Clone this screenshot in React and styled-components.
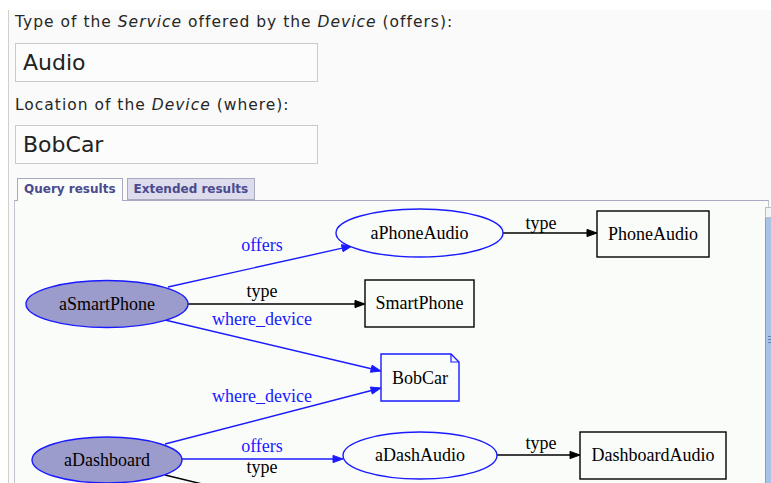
import React from 'react';
import styled, { createGlobalStyle } from 'styled-components';

const Global = createGlobalStyle`
  html, body { margin: 0; padding: 0; background: #ffffff; overflow: hidden; }
  body { font-family: "DejaVu Sans", "Liberation Sans", sans-serif; }
`;

const Page = styled.div`
  margin: 10px 0 0 8px;
  border-left: 1px solid #cfd1cf;
  background: #f9faf9;
  padding: 2px 0 0 5px;
  height: 480px;
`;

const FieldLabel = styled.div`
  margin: ${p => p.$top}px 0 0 1px;
  font-size: 15.5px;
  letter-spacing: 1px;
  line-height: 20px;
  color: #262626;
  em { font-style: italic; }
`;

const TextBox = styled.div`
  margin: ${p => p.$top}px 0 0 1px;
  box-sizing: border-box;
  width: 303px;
  height: 39px;
  border: 1px solid #c9cbc9;
  background: #fbfcfb;
  padding: 0 0 0 7px;
  font-size: 22px;
  line-height: 37px;
  color: #222222;
`;

const TabRow = styled.div`
  display: flex;
  gap: 4px;
  margin-top: 14px;
  padding-left: 3px;
  position: relative;
  z-index: 1;
`;

const Tab = styled.div`
  box-sizing: border-box;
  height: ${p => (p.$active ? 23 : 22)}px;
  margin-bottom: ${p => (p.$active ? -1 : 0)}px;
  border: 1px solid #a9a9c2;
  border-bottom: ${p => (p.$active ? 'none' : '1px solid #a9a9c2')};
  background: ${p => (p.$active ? '#fafcfa' : '#dcdced')};
  padding: 0 6px;
  font-size: 12px;
  font-weight: bold;
  line-height: 21px;
  color: #4a4a8c;
`;

const Panel = styled.div`
  box-sizing: border-box;
  width: 755px;
  height: 300px;
  border: 1px solid #c2c3cc;
  border-top-color: #a9a9c2;
  background: #fafcfa;
  display: flex;
`;

const Graph = styled.svg`
  flex: none;
  display: block;
  font-family: "Liberation Serif", "DejaVu Serif", serif;
`;

const ScrollBar = styled.div`
  flex: none;
  width: 10px;
  margin-top: 6px;
  display: flex;
  flex-direction: column;
`;

const ScrollButton = styled.div`
  height: 11px;
  box-sizing: border-box;
  border: 1px solid #b8bcc4;
  background: #f3f4f6;
`;

const ScrollThumb = styled.div`
  flex: 1;
  background: #a9c3e7;
  border-left: 1px solid #7f9fcc;
  display: flex;
  flex-direction: column;
  align-items: flex-start;
  padding: 118px 0 0 2px;
  gap: 2px;
`;

const Grip = styled.div`
  width: 4px;
  height: 1px;
  background: #5f7fb0;
`;

const BLUE = '#1a1aff';

function arrow(x1, y1, x2, y2) {
  const dx = x2 - x1, dy = y2 - y1, L = Math.hypot(dx, dy);
  const ux = dx / L, uy = dy / L;
  const bx = x2 - ux * 10, by = y2 - uy * 10;
  const nx = -uy * 3.6, ny = ux * 3.6;
  return {
    line: [x1, y1, bx, by],
    poly: `${x2},${y2} ${bx + nx},${by + ny} ${bx - nx},${by - ny}`,
  };
}

const edges = [
  { from: [168, 287], to: [352, 246], color: BLUE, label: 'offers', lx: 262, ly: 251 },
  { from: [188, 304], to: [365, 304], color: '#000', label: 'type', lx: 262, ly: 297 },
  { from: [165, 320], to: [381, 371], color: BLUE, label: 'where_device', lx: 262, ly: 325 },
  { from: [165, 444], to: [381, 388], color: BLUE, label: 'where_device', lx: 262, ly: 402 },
  { from: [182, 459], to: [343, 459], color: BLUE, label: 'offers', lx: 262, ly: 452 },
  { from: [165, 475], to: [260, 498], color: '#000', label: 'type', lx: 262, ly: 473, noHead: true },
  { from: [503, 233], to: [597, 233], color: '#000', label: 'type', lx: 541, ly: 229 },
  { from: [497, 455], to: [580, 455], color: '#000', label: 'type', lx: 541, ly: 449 },
];

const ellipses = [
  { cx: 107, cy: 304, rx: 81, ry: 23.5, fill: '#9c9ccc', label: 'aSmartPhone' },
  { cx: 107, cy: 460, rx: 75, ry: 23, fill: '#9c9ccc', label: 'aDashboard' },
  { cx: 419.5, cy: 233, rx: 83.5, ry: 24, fill: '#fafcfa', label: 'aPhoneAudio' },
  { cx: 420, cy: 455.5, rx: 77, ry: 23.5, fill: '#fafcfa', label: 'aDashAudio' },
];

const boxes = [
  { x: 597, y: 211, w: 112, h: 46, label: 'PhoneAudio' },
  { x: 365, y: 280, w: 109, h: 47, label: 'SmartPhone' },
  { x: 580, y: 432, w: 146, h: 47, label: 'DashboardAudio' },
];

export default function App() {
  return (
    <>
      <Global />
      <Page>
        <FieldLabel $top={0}>
          Type of the <em>Service</em> offered by the <em>Device</em> (offers):
        </FieldLabel>
        <TextBox $top={11}>Audio</TextBox>
        <FieldLabel $top={13}>
          Location of the <em>Device</em> (where):
        </FieldLabel>
        <TextBox $top={10}>BobCar</TextBox>
        <TabRow>
          <Tab $active>Query results</Tab>
          <Tab>Extended results</Tab>
        </TabRow>
        <Panel>
          <Graph width="750" height="298" viewBox="15 201 750 298">
            {edges.map((e, i) => {
              const a = arrow(e.from[0], e.from[1], e.to[0], e.to[1]);
              return (
                <g key={i}>
                  <line
                    x1={a.line[0]}
                    y1={a.line[1]}
                    x2={e.noHead ? e.to[0] : a.line[2]}
                    y2={e.noHead ? e.to[1] : a.line[3]}
                    stroke={e.color}
                    strokeWidth="1.4"
                  />
                  {!e.noHead && <polygon points={a.poly} fill={e.color} stroke={e.color} strokeWidth="1" />}
                  <text x={e.lx} y={e.ly} fontSize="18" textAnchor="middle" fill={e.color}>
                    {e.label}
                  </text>
                </g>
              );
            })}
            {ellipses.map((n, i) => (
              <g key={i}>
                <ellipse cx={n.cx} cy={n.cy} rx={n.rx} ry={n.ry} fill={n.fill} stroke={BLUE} strokeWidth="1.4" />
                <text x={n.cx} y={n.cy + 5.5} fontSize="18" textAnchor="middle" fill="#000">
                  {n.label}
                </text>
              </g>
            ))}
            {boxes.map((b, i) => (
              <g key={i}>
                <rect x={b.x} y={b.y} width={b.w} height={b.h} fill="#fafcfa" stroke="#000" strokeWidth="1.4" />
                <text x={b.x + b.w / 2} y={b.y + b.h / 2 + 5.5} fontSize="18" textAnchor="middle" fill="#000">
                  {b.label}
                </text>
              </g>
            ))}
            <path d="M381,354 H451 L459,362 V401 H381 Z" fill="#fafcfa" stroke={BLUE} strokeWidth="1.4" />
            <path d="M451,354 V362 H459" fill="none" stroke={BLUE} strokeWidth="1.2" />
            <text x="420" y="384" fontSize="18" textAnchor="middle" fill="#000">BobCar</text>
          </Graph>
          <ScrollBar>
            <ScrollButton />
            <ScrollThumb>
              <Grip />
              <Grip />
              <Grip />
            </ScrollThumb>
          </ScrollBar>
        </Panel>
      </Page>
    </>
  );
}
